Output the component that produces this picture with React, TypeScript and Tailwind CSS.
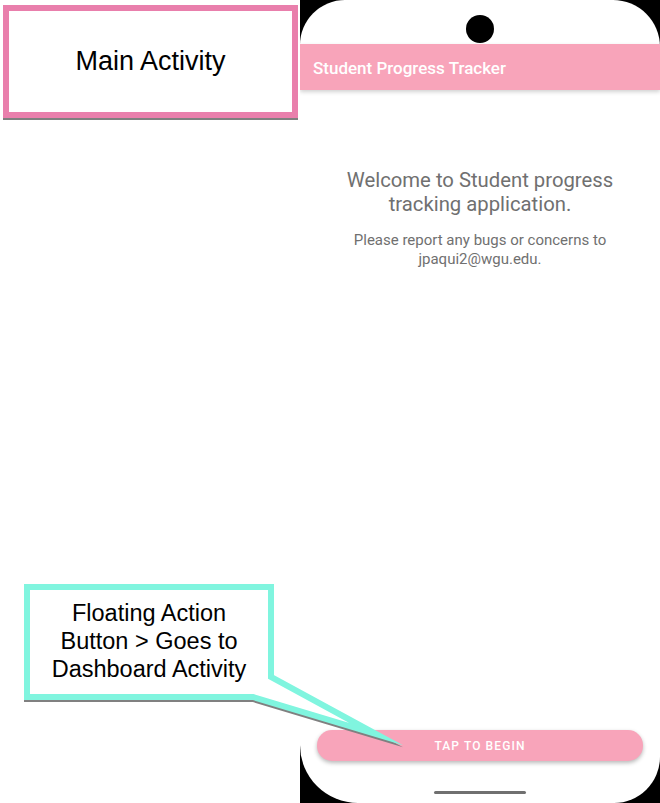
import React from "react";

export default function App() {
  return (
    <div className="relative w-[660px] h-[803px] bg-white overflow-hidden flex">
      {/* Left annotation column */}
      <div className="w-[300px] shrink-0 pl-[3px] pt-[5px]">
        <div className="w-[295px] h-[113px] border-[6px] border-[#e97fac] bg-white shadow-[0_2px_0_#7f7f7f] flex items-center justify-center">
          <span className="text-[27px] text-black font-['Liberation_Sans',Arial,sans-serif] leading-none">
            Main Activity
          </span>
        </div>
      </div>

      {/* Phone */}
      <div className="w-[360px] h-[803px] bg-black shrink-0">
        <div className="w-full h-full bg-white rounded-tl-[45px] rounded-tr-[47px] rounded-bl-[58px] rounded-br-[46px] overflow-hidden flex flex-col font-['Roboto',sans-serif]">
          <div className="h-[44px] flex justify-center pt-[15px] shrink-0">
            <div className="w-[28px] h-[28px] rounded-full bg-black" />
          </div>
          <div className="h-[46px] bg-[#f8a4ba] pl-[13px] pt-[3px] flex items-center shadow-[0_2px_4px_rgba(0,0,0,0.18)] shrink-0 z-10">
            <span className="text-white text-[17px] font-medium">
              Student Progress Tracker
            </span>
          </div>
          <div className="flex-1 flex flex-col items-center">
            <p className="mt-[79px] text-[20.3px] leading-[23.5px] text-[#707070] text-center">
              Welcome to Student progress
              <br />
              tracking application.
            </p>
            <p className="mt-[15px] text-[15px] leading-[18.5px] text-[#707070] text-center">
              Please report any bugs or concerns to
              <br />
              jpaqui2@wgu.edu.
            </p>
            <div className="flex-1" />
            <div className="w-[326px] h-[31px] rounded-[15px] bg-[#f8a4ba] shadow-[0_2px_4px_rgba(0,0,0,0.28)] flex items-center justify-center">
              <span className="text-white text-[12px] font-medium tracking-[1.1px]">
                TAP TO BEGIN
              </span>
            </div>
            <div className="mt-[30px] mb-[9px] w-[92px] h-[3px] rounded-full bg-[#707070]" />
          </div>
        </div>
      </div>

      {/* Callout annotation overlay */}
      <svg
        className="absolute left-0 top-0 pointer-events-none"
        width="660"
        height="803"
        viewBox="0 0 660 803"
      >
        <polygon
          points="27,587 271,587 271,677 376,734 253,697 27,697"
          transform="translate(0,2)"
          fill="#808080"
          stroke="#808080"
          strokeWidth="6"
          strokeLinejoin="miter"
          strokeMiterlimit="30"
        />
        <polygon
          points="27,587 271,587 271,677 376,734 253,697 27,697"
          fill="#ffffff"
          stroke="#80f5df"
          strokeWidth="6"
          strokeLinejoin="miter"
          strokeMiterlimit="30"
        />
      </svg>
      <div className="absolute left-[30px] top-[599px] w-[238px] text-center text-[23.5px] leading-[28px] text-black font-['Liberation_Sans',Arial,sans-serif]">
        Floating Action
        <br />
        Button &gt; Goes to
        <br />
        Dashboard Activity
      </div>
    </div>
  );
}
